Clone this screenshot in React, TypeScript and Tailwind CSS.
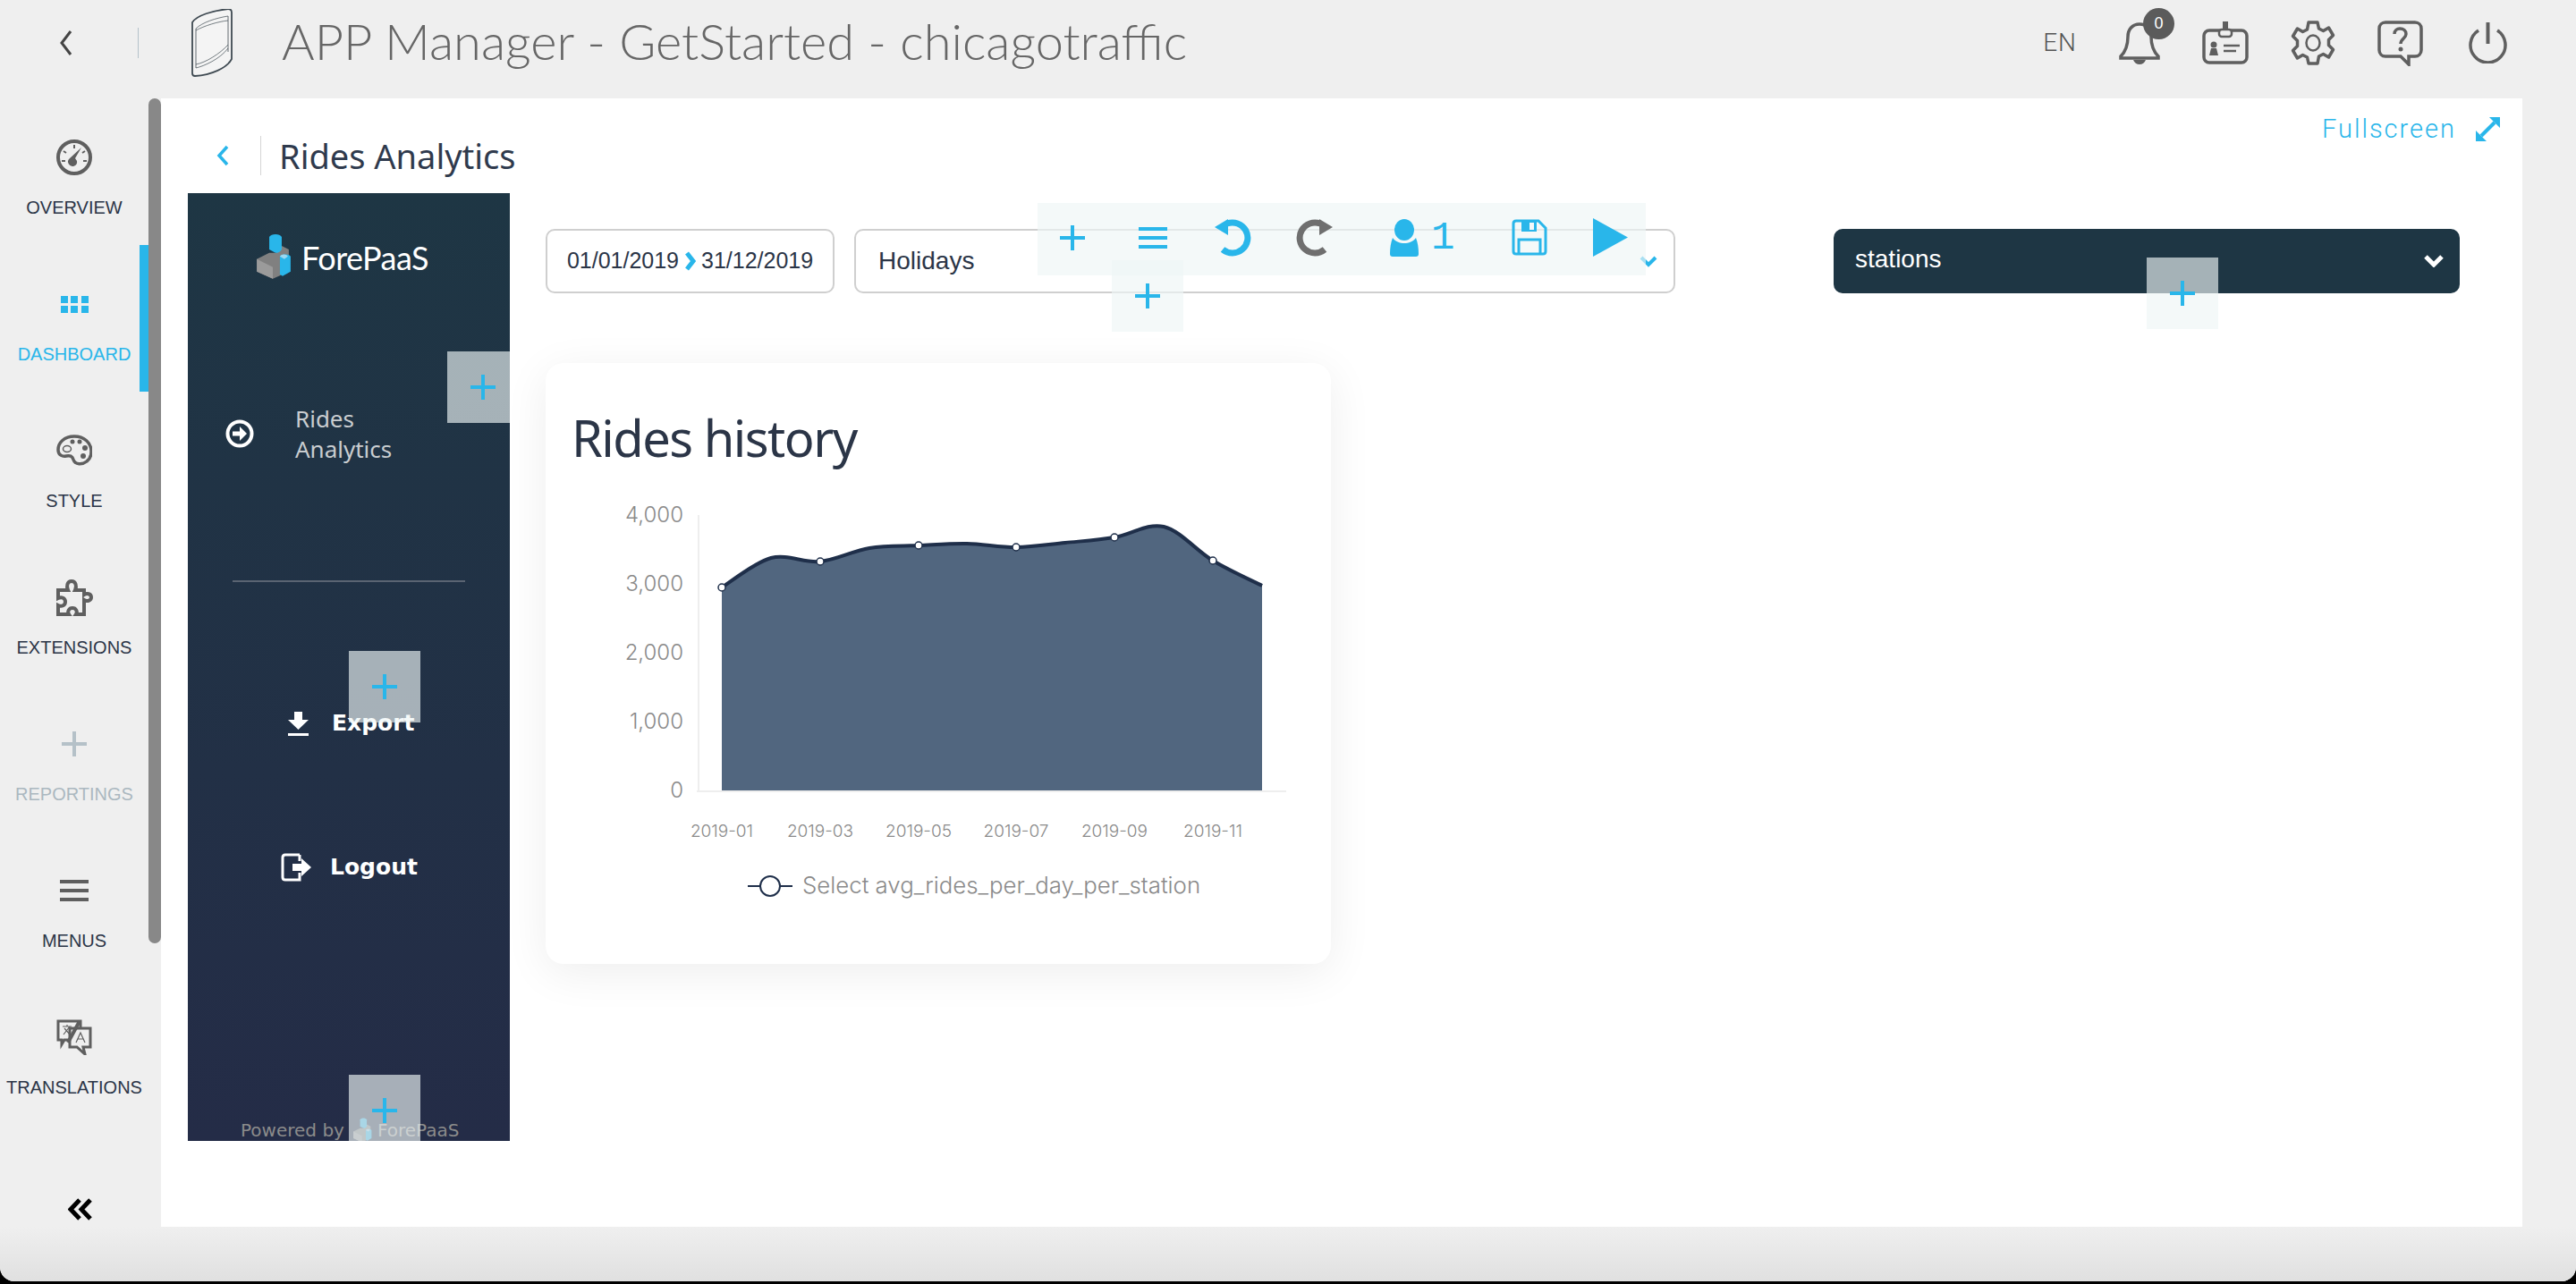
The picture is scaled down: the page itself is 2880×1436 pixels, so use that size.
const GREY = "#5f5f5f";
const BLUE = "#29b6ea";

const navItems = [
  { label: "OVERVIEW", icon: <GaugeIcon /> },
  { label: "DASHBOARD", icon: <GridIcon />, active: true },
  { label: "STYLE", icon: <PaletteIcon /> },
  { label: "EXTENSIONS", icon: <PuzzleIcon /> },
  { label: "REPORTINGS", icon: <Plus size={28} color="#b5c1c8" />, disabled: true },
  { label: "MENUS", icon: <BurgerIcon color={GREY} /> },
  { label: "TRANSLATIONS", icon: <TranslateIcon /> },
];

function Plus({ size = 28, color = BLUE }: { size?: number; color?: string }) {
  return (
    <svg width={size} height={size} viewBox="0 0 28 28">
      <path d="M14 0v28M0 14h28" stroke={color} strokeWidth="4" />
    </svg>
  );
}

function GaugeIcon() {
  return (
    <svg width="40" height="42" viewBox="0 0 40 42" fill="none">
      <circle cx="20" cy="21" r="18" stroke={GREY} strokeWidth="4" />
      <path d="M20 7v4M8 14l3 2M32 14l-3 2M6 25h4M30 25h4" stroke={GREY} strokeWidth="2" />
      <path d="M28 10l-7 12 2 3a5 5 0 1 1-8-3z" fill={GREY} />
    </svg>
  );
}

function GridIcon() {
  return (
    <svg width="31" height="19" viewBox="0 0 31 19" fill={BLUE}>
      <rect x="0" y="0" width="8" height="8" />
      <rect x="11" y="0" width="8" height="8" />
      <rect x="23" y="0" width="8" height="8" />
      <rect x="0" y="11" width="8" height="8" />
      <rect x="11" y="11" width="8" height="8" />
      <rect x="23" y="11" width="8" height="8" />
    </svg>
  );
}

function PaletteIcon() {
  return (
    <svg width="40" height="36" viewBox="0 0 40 36" fill="none">
      <path
        d="M20 2C9 2 2 9 2 17c0 6 5 8 9 7 4-1 7 0 8 4 2 6 10 6 15 2 4-3 5-7 5-11C39 9 31 2 20 2z"
        stroke={GREY}
        strokeWidth="3.5"
      />
      <ellipse cx="12" cy="16" rx="4.5" ry="3.5" stroke={GREY} strokeWidth="1.5" />
      <circle cx="18" cy="8" r="2.5" fill={GREY} />
      <circle cx="26" cy="8" r="2.5" fill={GREY} />
      <circle cx="32" cy="15" r="3" fill={GREY} />
      <circle cx="30" cy="24" r="3" fill={GREY} />
    </svg>
  );
}

function PuzzleIcon() {
  return (
    <svg width="41" height="41" viewBox="0 0 41 41" fill="none">
      <path
        d="M2 12H13C11 8 12 2 17 2C22 2 23 8 21 12H31V17C34 15 39 16 39 20C39 24 34 25 31 23V39H22C24 36 22 32 18 32C14 32 12 36 14 39H2V29C6 31 10 29 10 25C10 21 6 19 2 21Z"
        stroke={GREY}
        strokeWidth="4"
      />
    </svg>
  );
}

function BurgerIcon({ color }: { color: string }) {
  return (
    <svg width="32" height="24" viewBox="0 0 32 24" fill={color}>
      <rect y="0" width="32" height="4" />
      <rect y="10" width="32" height="4" />
      <rect y="20" width="32" height="4" />
    </svg>
  );
}

function TranslateIcon() {
  return (
    <svg width="40" height="40" viewBox="0 0 40 40" fill="none">
      <path d="M2 2h25v21H9l-3 5v-5H2z" stroke={GREY} strokeWidth="3" />
      <path d="M15 10h23v21h-8l2 8-9-8H15z" fill="#efefef" stroke={GREY} strokeWidth="3" />
      <path d="M26 2L13 26" stroke={GREY} strokeWidth="4" />
      <path d="M7 8h10M12 6v2M8 17l7-9M9 10l7 8" stroke={GREY} strokeWidth="1.2" />
      <path d="M22 26l5-11 5 11M24 22h6" stroke={GREY} strokeWidth="1.2" />
    </svg>
  );
}

function PhoneIcon() {
  return (
    <svg width="46" height="76" viewBox="0 0 46 76" fill="none" stroke="#3f4a52">
      <path
        d="M1 15C6 7 24 2 41 0q4 0 4 4v52C40 66 22 74 4 75q-3 0-3-3z"
        strokeWidth="1.8"
        fill="#f4f4f4"
      />
      <path d="M5 22C12 15 28 10 41 8M5 24C14 19 30 14 41 13M5 66C14 64 32 56 41 44M5 62C16 60 32 50 41 40" strokeWidth="0.7" />
      <path d="M5 22v44M41 8v40" strokeWidth="0.8" />
    </svg>
  );
}

function BellIcon() {
  return (
    <svg width="46" height="50" viewBox="0 0 46 50" fill="none">
      <path
        d="M10 18c0-8 5-14 13-14s13 6 13 14c0 10 3 17 8 22v2H2v-2c5-5 8-12 8-22z"
        stroke={GREY}
        strokeWidth="3.5"
      />
      <path d="M16 44h14c-1 3-4 5-7 5s-6-2-7-5z" fill={GREY} />
    </svg>
  );
}

function IdIcon() {
  return (
    <svg width="52" height="48" viewBox="0 0 52 48" fill="none">
      <rect x="2" y="10" width="48" height="36" rx="6" stroke={GREY} strokeWidth="3.5" />
      <path d="M26 0v8" stroke={GREY} strokeWidth="6" />
      <rect x="19" y="9" width="14" height="8" rx="3" fill="#efefef" stroke={GREY} strokeWidth="2.5" />
      <circle cx="13" cy="26" r="3.5" fill={GREY} />
      <path d="M8 38l2-8h6l2 8z" fill={GREY} />
      <path d="M24 27h18M24 33h14" stroke={GREY} strokeWidth="2.5" />
    </svg>
  );
}

function GearIcon() {
  return (
    <svg width="50" height="50" viewBox="0 0 50 50" fill="none">
      <path
        d="M20 2h10l1.5 7 5 2.5 6-3.5 5 8.500-5 5v6l5 5-5 8.500-6-3.500-5 2.500L30 48H20l-1.500-7-5-2.500-6 3.500-5-8.500 5-5v-6l-5-5 5-8.500 6 3.500 5-2.500z"
        stroke={GREY}
        strokeWidth="3.5"
        strokeLinejoin="round"
      />
      <ellipse cx="25" cy="25" rx="7.500" ry="8.500" stroke={GREY} strokeWidth="2.500" />
    </svg>
  );
}

function HelpIcon() {
  return (
    <svg width="51" height="51" viewBox="0 0 51 51" fill="none">
      <path
        d="M9 2h33c4 0 7 3 7 7v24c0 4-3 7-7 7h-7v9l-9-9H9c-4 0-7-3-7-7V9c0-4 3-7 7-7z"
        stroke={GREY}
        strokeWidth="3.5"
      />
      <path d="M19 15c0-4 3-6 6-6 4 0 7 2 7 6 0 5-6 5-6 11" stroke={GREY} strokeWidth="3.5" />
      <circle cx="26" cy="32" r="2.500" fill={GREY} />
    </svg>
  );
}

function PowerIcon() {
  return (
    <svg width="43" height="46" viewBox="0 0 43 46" fill="none" stroke={GREY} strokeWidth="3.500">
      <path d="M21.500 0v24" strokeWidth="4" />
      <path d="M11 9a19.500 19.500 0 1 0 21 0" />
    </svg>
  );
}

function FullscreenIcon() {
  return (
    <svg width="27" height="27" viewBox="0 0 27 27" fill={BLUE}>
      <path d="M15 0h12v12zM0 15l12 12H0z" />
      <path d="M21 6L6 21" stroke={BLUE} strokeWidth="4" />
    </svg>
  );
}

function UndoIcon({ color, flip }: { color: string; flip?: boolean }) {
  return (
    <svg width="42" height="42" viewBox="0 0 42 42" fill="none" className={flip ? "-scale-x-100" : ""}>
      <path d="M14 5A17 17 0 1 1 9 34" stroke={color} strokeWidth="7" />
      <path d="M0 9L15 0v18z" fill={color} />
    </svg>
  );
}

function UserIcon() {
  return (
    <svg width="38" height="42" viewBox="0 0 38 42" fill={BLUE}>
      <ellipse cx="19" cy="12" rx="11" ry="12" />
      <path d="M6 21c3 4 8 6 13 6s10-2 13-6c2 5 3 11 3 18 0 2-1 3-3 3H6c-2 0-3-1-3-3 0-7 1-13 3-18z" />
    </svg>
  );
}

function SaveIcon() {
  return (
    <svg width="40" height="41" viewBox="0 0 40 41" fill="none">
      <path d="M5 2h25l8 8v26c0 2-1 3-3 3H5c-2 0-3-1-3-3V5c0-2 1-3 3-3z" stroke={BLUE} strokeWidth="3" />
      <path d="M11 2h17v12H11z" fill={BLUE} />
      <rect x="20" y="4" width="5" height="8" fill="#f4f9fa" />
      <path d="M8 39V23h24v16" stroke={BLUE} strokeWidth="3" />
    </svg>
  );
}

function LogoIcon({ size = 39 }: { size?: number }) {
  return (
    <svg width={size} height={size * 1.3} viewBox="0 0 39 51">
      <path d="M14 22L0 29v14l18 8 18-8V18l-8-4-6 6v2z" fill="#808080" />
      <path d="M0 29l18 9v13L0 43z" fill="#9b9b9b" />
      <path d="M14 4c2-4 12-4 14 0v14c-2 3-4 4-7 4l-7-4z" fill={BLUE} />
      <path d="M26 26c2-3 10-3 12 0v17l-9 5-3-2z" fill={BLUE} />
      <path d="M26 26c2-3 7-3 9 0l-4 3z" fill="#9bd8f1" />
    </svg>
  );
}

function Tile({ className }: { className: string }) {
  return (
    <div className={`absolute w-[80px] h-[80px] bg-[#eef6f6]/65 flex items-center justify-center ${className}`}>
      <Plus />
    </div>
  );
}

function Toolbar() {
  return (
    <div className="absolute left-[590px] top-[11px] w-[680px] h-[81px] bg-[#eef6f6]/65 flex items-center pb-[4px]">
      <div className="ml-[25px]">
        <Plus />
      </div>
      <div className="ml-[60px]">
        <BurgerIcon color={BLUE} />
      </div>
      <div className="ml-[53px]">
        <UndoIcon color={BLUE} />
      </div>
      <div className="ml-[48px]">
        <UndoIcon color="#6f6f6f" flip />
      </div>
      <div className="ml-[61px] flex items-center gap-[11px]">
        <UserIcon />
        <span className="font-['Liberation_Mono',monospace] text-[44px] leading-[42px] text-[#29b6ea]">1</span>
      </div>
      <div className="ml-[64px]">
        <SaveIcon />
      </div>
      <svg className="ml-[51px]" width="39" height="43" viewBox="0 0 39 43" fill={BLUE}>
        <path d="M0 0l39 21.500L0 43z" />
      </svg>
    </div>
  );
}

const points: [number, number][] = [
  [807, 657],
  [862, 624],
  [917, 628],
  [972, 613],
  [1027, 610],
  [1081, 608],
  [1136, 612],
  [1191, 607],
  [1246, 601],
  [1301, 589],
  [1356, 627],
  [1411, 655],
];

// smooth line through the monthly values
function linePath() {
  let d = `M${points[0][0]} ${points[0][1]}`;
  for (let i = 0; i < points.length - 1; i++) {
    const p0 = points[Math.max(i - 1, 0)];
    const p1 = points[i];
    const p2 = points[i + 1];
    const p3 = points[Math.min(i + 2, points.length - 1)];
    const c1x = p1[0] + (p2[0] - p0[0]) / 6;
    const c1y = p1[1] + (p2[1] - p0[1]) / 6;
    const c2x = p2[0] - (p3[0] - p1[0]) / 6;
    const c2y = p2[1] - (p3[1] - p1[1]) / 6;
    d += ` C${c1x} ${c1y} ${c2x} ${c2y} ${p2[0]} ${p2[1]}`;
  }
  return d;
}

function RidesChart() {
  const line = linePath();
  const yTicks = [
    ["4,000", 576],
    ["3,000", 653],
    ["2,000", 730],
    ["1,000", 807],
    ["0", 884],
  ] as const;
  const xTicks = [
    ["2019-01", 807],
    ["2019-03", 917],
    ["2019-05", 1027],
    ["2019-07", 1136],
    ["2019-09", 1246],
    ["2019-11", 1356],
  ] as const;
  return (
    <svg width="878" height="490" viewBox="610 530 878 490" className="font-['Inter',sans-serif] font-light">
      <path d="M781 576V885M779 885H1438" stroke="#eeeeee" strokeWidth="2" fill="none" />
      <path d={`${line} V884 H807 Z`} fill="#51667f" />
      <path d={line} fill="none" stroke="#1f2f4a" strokeWidth="4" />
      {points
        .filter((_, i) => i % 2 === 0)
        .map(([x, y]) => (
          <circle key={x} cx={x} cy={y} r="4" fill="#fff" stroke="#1f2f4a" strokeWidth="1.500" />
        ))}
      {yTicks.map(([label, y]) => (
        <text key={label} x="764" y={y + 8} textAnchor="end" fontSize="24" fill="#8a8a8a">
          {label}
        </text>
      ))}
      {xTicks.map(([label, x]) => (
        <text key={label} x={x} y="936" textAnchor="middle" fontSize="19" fill="#8a8a8a">
          {label}
        </text>
      ))}
      <path d="M836 991H886" stroke="#1f2f4a" strokeWidth="2" />
      <circle cx="861" cy="991" r="11" fill="#fff" stroke="#1f2f4a" strokeWidth="2" />
      <text x="897" y="999" fontSize="25.800" fill="#8a8a8a">
        Select avg_rides_per_day_per_station
      </text>
    </svg>
  );
}

function SideNav() {
  return (
    <div className="relative w-[180px] shrink-0 flex flex-col">
      {navItems.map((item) => (
        <div
          key={item.label}
          className={`relative w-[166px] h-[164px] flex flex-col items-center font-['Liberation_Sans',sans-serif] text-[20px] ${
            item.active ? "text-[#29b6ea]" : item.disabled ? "text-[#abb8c0]" : "text-[#2b3547]"
          }`}
        >
          <div className="h-[132px] flex items-center justify-center">{item.icon}</div>
          <span className="absolute top-[110px] leading-[24px] whitespace-nowrap">{item.label}</span>
          {item.active && <div className="absolute right-0 top-0 w-[10px] h-full bg-[#29b6ea]" />}
        </div>
      ))}
      <div className="w-[166px] pl-[76px] mt-[81px]">
        <svg width="27" height="27" viewBox="0 0 27 27" fill="none" stroke="#000" strokeWidth="5">
          <path d="M13 3L3 13.500 13 24M25 3L15 13.500 25 24" />
        </svg>
      </div>
      <div className="absolute left-[166px] top-0 w-[14px] h-[945px] bg-[#888888] rounded-[7px]" />
    </div>
  );
}

function AppSidebar() {
  return (
    <div className="relative w-[360px] h-[1060px] shrink-0 overflow-hidden flex flex-col bg-gradient-to-b from-[#1e3644] to-[#242c47] font-['DejaVu_Sans',sans-serif]">
      <div className="pt-[45px] pl-[77px] flex items-center gap-[11px]">
        <LogoIcon />
        <span className="translate-y-[2px] font-['Lato',sans-serif] text-[36px] leading-[51px] text-white tracking-[-0.5px]">
          ForePaaS
        </span>
      </div>
      <div className="mt-[139px] pl-[42px] flex items-center gap-[46px]">
        <svg width="32" height="32" viewBox="0 0 32 32" fill="none">
          <circle cx="16" cy="16" r="13.500" stroke="#fff" strokeWidth="4" />
          <path d="M8 13.500h8V8l8 8-8 8v-5.500H8z" fill="#fff" />
        </svg>
        <span className="font-['Noto_Sans',sans-serif] text-[26px] leading-[34px] text-[#c9cdd0] w-[120px]">
          Rides Analytics
        </span>
      </div>
      <div className="mt-[130px] ml-[50px] w-[260px] h-[2px] bg-[#5a6472]" />
      <div className="mt-[138px] h-[40px] pl-[112px] flex items-center gap-[26px] text-white font-bold text-[25px]">
        <svg width="23" height="27" viewBox="0 0 23 27" fill="#fff">
          <path d="M7 0h9v9h7L11.500 20 0 9h7zM0 24h23v3H0z" />
        </svg>
        <span>Export</span>
      </div>
      <div className="mt-[121px] h-[40px] pl-[104px] flex items-center gap-[21px] text-white font-bold text-[25px]">
        <svg width="34" height="32" viewBox="0 0 34 32" fill="none">
          <path d="M21 2H5C3 2 2 3 2 5v22c0 2 1 3 3 3h16v-8M21 2v7" stroke="#fff" strokeWidth="3" />
          <path d="M13 12h10V6l11 10-11 10v-6H13z" fill="#fff" />
        </svg>
        <span>Logout</span>
      </div>
      <div className="mt-auto h-[24px] pl-[59px] flex items-center text-[20px] text-[#8b8b8b] whitespace-nowrap">
        <span>Powered by</span>
        <div className="ml-[10px] mr-[6px] opacity-80">
          <LogoIcon size={21} />
        </div>
        <span>ForePaaS</span>
      </div>
      <Tile className="left-[290px] top-[177px] overflow-hidden" />
      <Tile className="left-[180px] top-[512px]" />
      <Tile className="left-[180px] top-[986px]" />
    </div>
  );
}

export default function App() {
  return (
    <div className="w-[2880px] h-[1436px] bg-black overflow-hidden font-['Liberation_Sans',sans-serif]">
      <div className="h-[1433px] bg-[#efefef] rounded-b-[16px] overflow-hidden flex flex-col">
        <header className="h-[110px] shrink-0 flex items-center pb-[14px] text-[#666666]">
          <svg className="ml-[66px]" width="15" height="30" viewBox="0 0 15 30" fill="none" stroke="#444" strokeWidth="3">
            <path d="M13 2L3 15l10 13" />
          </svg>
          <div className="ml-[73px] w-[1px] h-[34px] bg-[#b4c2ca]" />
          <div className="ml-[59px]">
            <PhoneIcon />
          </div>
          <h1 className="ml-[55px] mb-[4px] font-['Lato',sans-serif] font-light text-[56px] leading-[70px] whitespace-nowrap">
            APP Manager - GetStarted - chicagotraffic
          </h1>
          <span className="ml-auto font-['Roboto',sans-serif] font-light text-[28px] tracking-[1px] text-[#555]">EN</span>
          <div className="relative ml-[47px]">
            <BellIcon />
            <span className="absolute left-[27px] top-[-14px] w-[35px] h-[35px] rounded-full bg-[#5b5b5b] text-white text-[18px] flex items-center justify-center">
              0
            </span>
          </div>
          <div className="ml-[47px]">
            <IdIcon />
          </div>
          <div className="ml-[47px]">
            <GearIcon />
          </div>
          <div className="ml-[47px]">
            <HelpIcon />
          </div>
          <div className="ml-[51px] mr-[77px]">
            <PowerIcon />
          </div>
        </header>

        <div className="h-[1262px] shrink-0 flex">
          <SideNav />
          <main className="w-[2640px] bg-white flex flex-col">
            <div className="h-[106px] shrink-0 flex justify-between">
              <div className="ml-[62px] h-[44px] mt-[42px] flex items-center">
                <svg width="14" height="24" viewBox="0 0 14 24" fill="none" stroke={BLUE} strokeWidth="3.500">
                  <path d="M12 2L3 12l9 10" />
                </svg>
                <div className="ml-[35px] w-[1px] h-[44px] bg-[#d5d5d5]" />
                <span className="ml-[20px] font-['Noto_Sans',sans-serif] text-[38px] leading-[44px] text-[#2f3a4d] whitespace-nowrap">
                  Rides Analytics
                </span>
              </div>
              <div className="mr-[25px] mt-[21px] h-[27px] flex items-center gap-[22px]">
                <span className="font-['Roboto',sans-serif] font-light text-[29px] tracking-[2px] text-[#29b6ea]">
                  Fullscreen
                </span>
                <FullscreenIcon />
              </div>
            </div>

            <div className="flex pl-[30px]">
              <AppSidebar />
              <div className="relative flex-1 pl-[40px] pt-[40px] pr-[70px]">
                <div className="flex items-center">
                  <div className="w-[323px] h-[72px] rounded-[10px] border-2 border-[#cfcfcf] flex items-center justify-center gap-[6px] text-[25px] text-[#2b3547]">
                    <span>01/01/2019</span>
                    <svg width="13" height="22" viewBox="0 0 13 22" fill="none" stroke={BLUE} strokeWidth="5">
                      <path d="M3 2l7 9-7 9" />
                    </svg>
                    <span>31/12/2019</span>
                  </div>
                  <div className="ml-[22px] w-[918px] h-[72px] rounded-[10px] border-2 border-[#cfcfcf] flex items-center justify-between pl-[25px] pr-[18px] text-[28px] text-[#2b3547]">
                    <span>Holidays</span>
                    <svg width="20" height="14" viewBox="0 0 20 14" fill="none" stroke={BLUE} strokeWidth="4">
                      <path d="M2 3l8 8 8-8" />
                    </svg>
                  </div>
                  <div className="ml-auto w-[700px] h-[72px] rounded-[10px] bg-[#1e3644] flex items-center justify-between pl-[24px] pr-[18px] text-[28px] text-white">
                    <span className="pb-[4px]">stations</span>
                    <svg width="22" height="14" viewBox="0 0 22 14" fill="none" stroke="#fff" strokeWidth="5">
                      <path d="M2 2l9 9 9-9" />
                    </svg>
                  </div>
                </div>

                <div className="mt-[78px] w-[878px] h-[672px] rounded-[20px] bg-white shadow-[0_10px_50px_rgba(0,0,0,0.07)]">
                  <h2 className="pl-[29px] pt-[48px] pb-[3px] font-['Noto_Sans',sans-serif] text-[56px] leading-[70px] text-[#2b3547] tracking-[-1.500px]">
                    Rides history
                  </h2>
                  <div className="mt-[3px]">
                    <RidesChart />
                  </div>
                </div>

                <Toolbar />
                <Tile className="left-[673px] top-[75px]" />
                <Tile className="left-[1830px] top-[72px]" />
              </div>
            </div>
          </main>
          <div className="flex-1" />
        </div>

        <div className="flex-1 bg-gradient-to-b from-[#efefef] to-[#e0e0e0]" />
      </div>
    </div>
  );
}
